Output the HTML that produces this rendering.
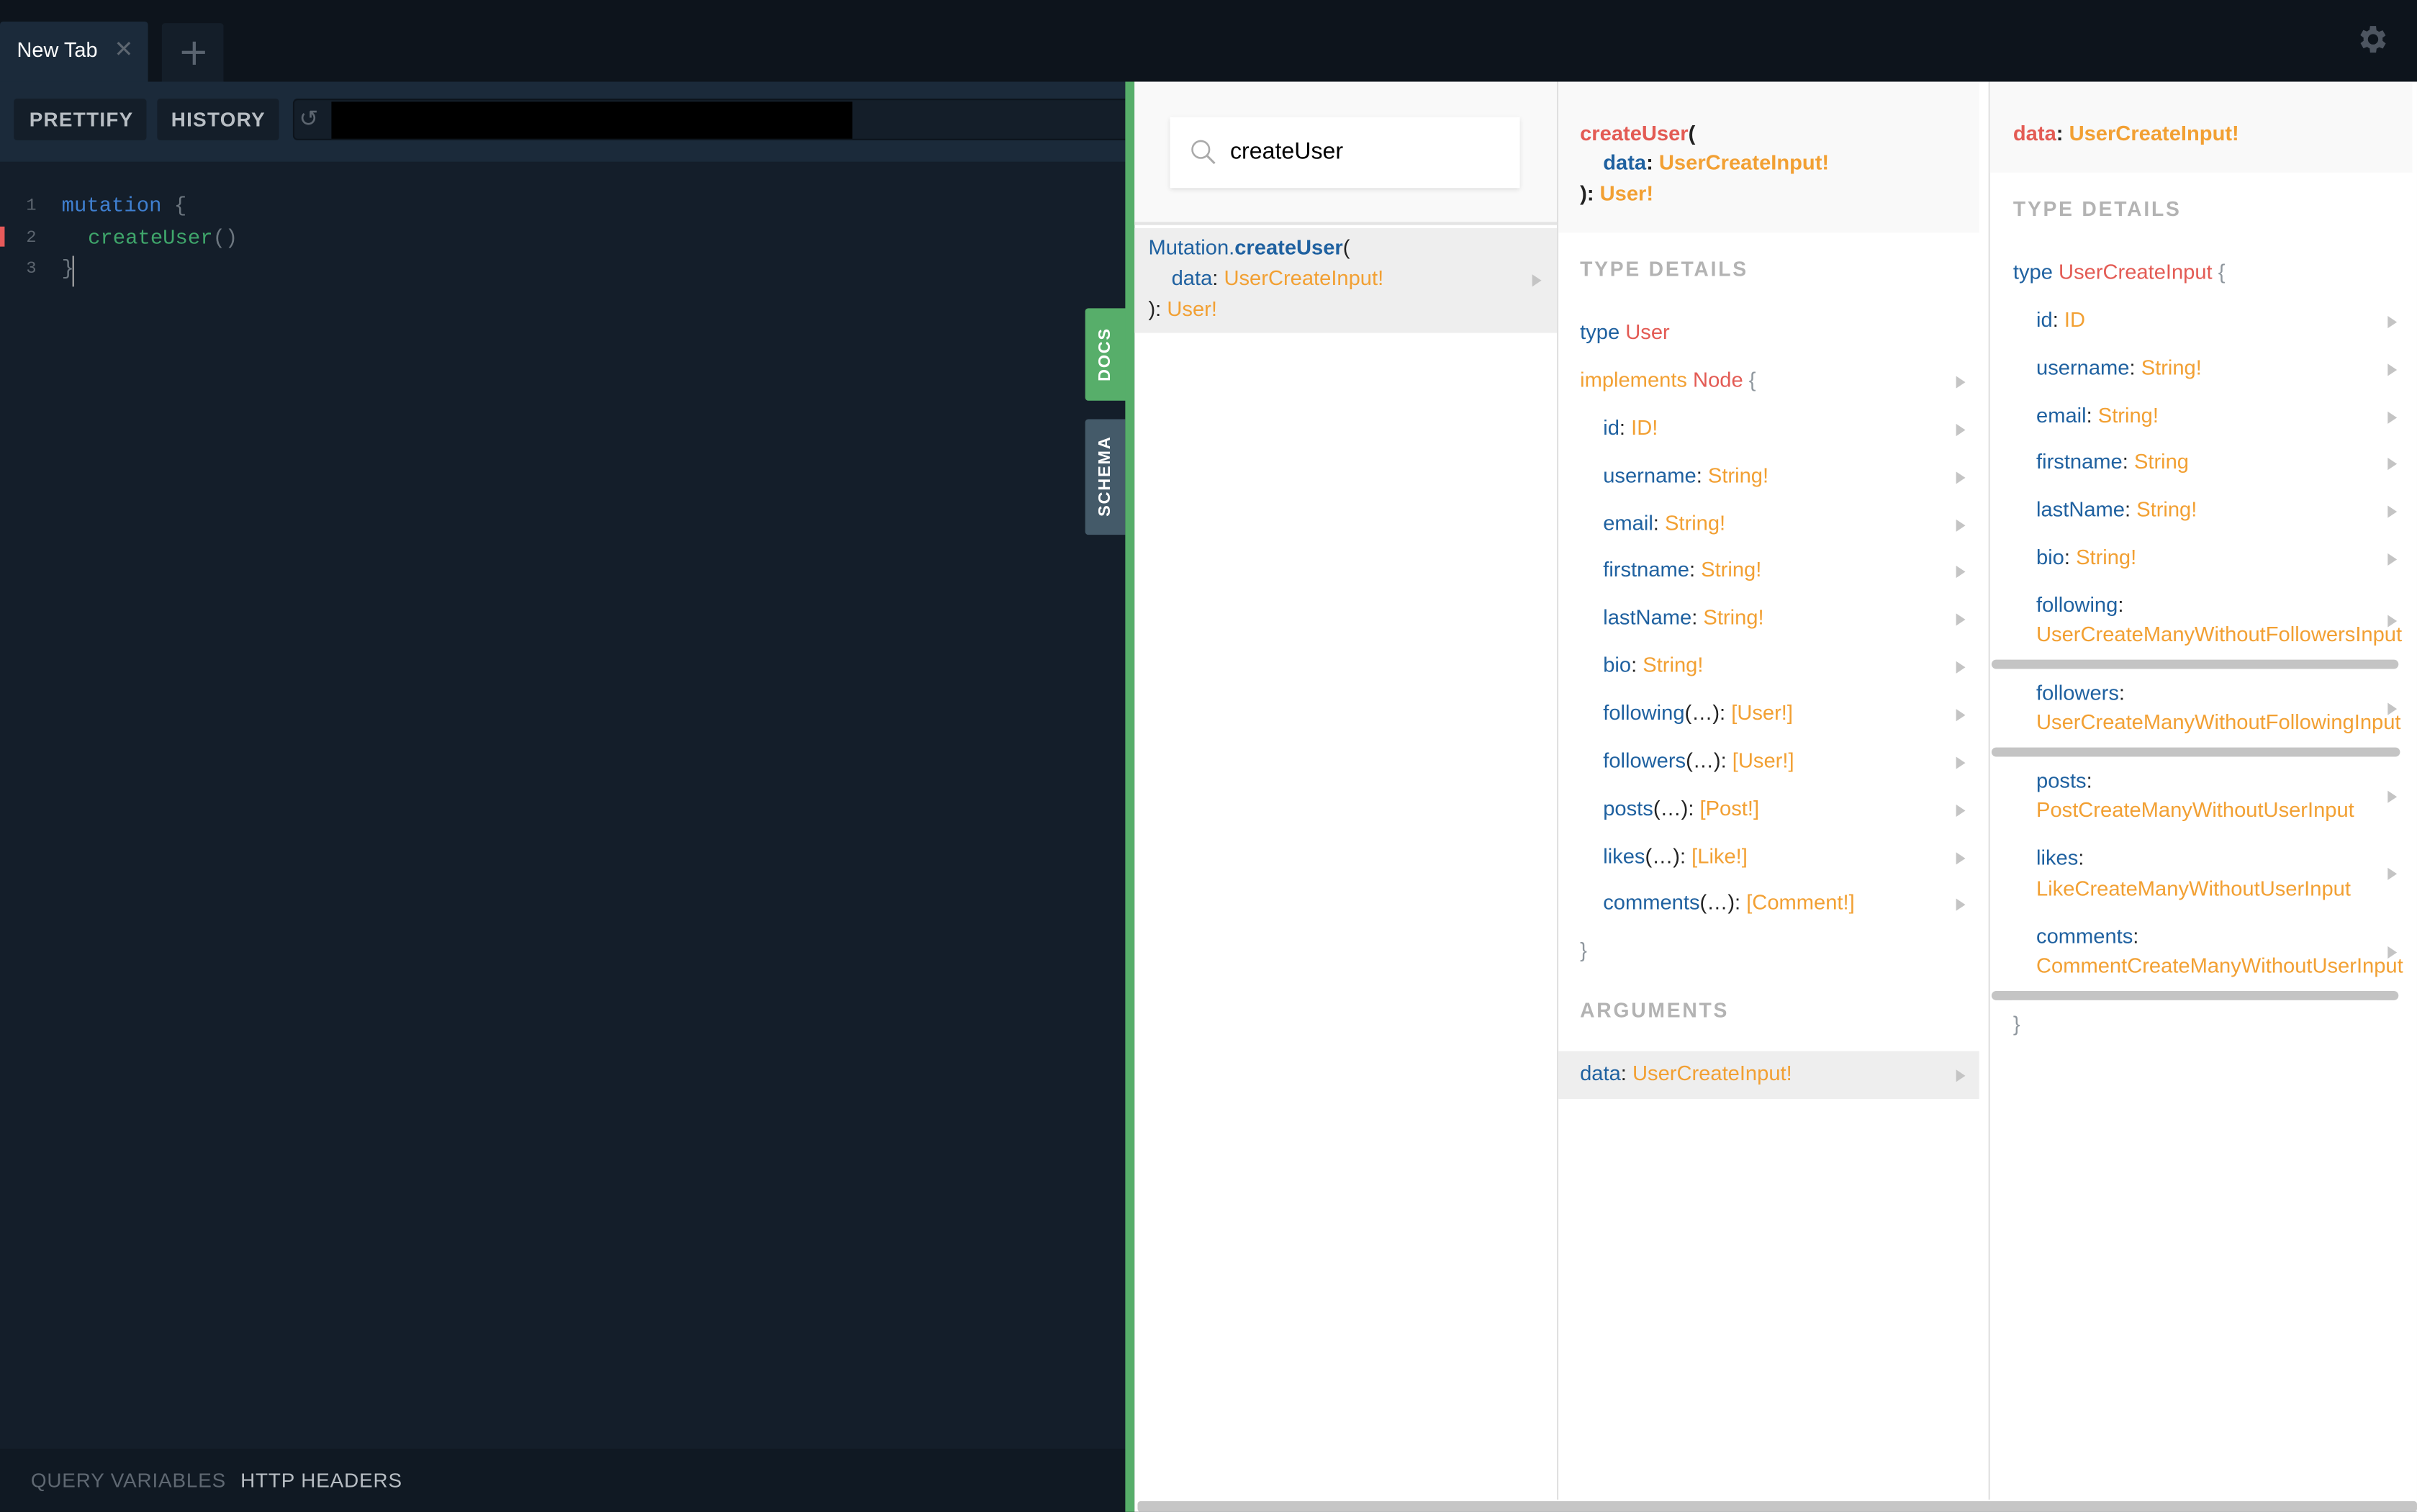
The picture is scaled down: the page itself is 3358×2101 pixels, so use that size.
<!DOCTYPE html>
<html><head><meta charset="utf-8"><style>
*{margin:0;padding:0;box-sizing:border-box}
html,body{width:3358px;height:2100px;overflow:hidden;background:#0f161f}
#w{position:absolute;left:0;top:0;width:1568px;height:981px;transform:scale(2.14158);transform-origin:0 0;font-family:"Liberation Sans",sans-serif;font-size:13.6px;overflow:hidden;background:#0f161f}
.a{position:absolute;white-space:nowrap}
.t{line-height:20px}
.b{color:#1f61a0}.o{color:#f2a033}.r{color:#e35b54}.k{color:#222}.g{color:#8f979e}
.h{color:#b3b3b3;font-weight:bold;letter-spacing:1.3px;font-size:13.2px}
.tri{position:absolute;width:0;height:0;border-left:6px solid #c4c4c4;border-top:4px solid transparent;border-bottom:4px solid transparent}
.sb{position:absolute;height:6px;border-radius:3px;background:#c4c4c4}
.mono{font-family:"Liberation Mono",monospace;font-size:13.5px}
</style></head><body><div id="w">
<div class="a" style="left:0;top:0;width:1568px;height:53px;background:#0d141c"></div>
<div class="a" style="left:0;top:14px;width:96px;height:39px;background:#1b2a3a;border-radius:2px 2px 0 0"></div>
<div class="a t" style="left:11px;top:23px;color:#fff;font-size:13.5px">New Tab</div>
<div class="a t" style="left:74px;top:23px;color:#5d6670;font-size:15px">✕</div>
<div class="a" style="left:105px;top:15px;width:40px;height:38px;background:#141e29;border-radius:2px 2px 0 0"></div>
<div class="a" style="left:118px;top:33px;width:15px;height:2px;background:#5a6470"></div>
<div class="a" style="left:124.5px;top:26.5px;width:2px;height:15px;background:#5a6470"></div>
<svg class="a" style="left:1528px;top:14px" width="23" height="23" viewBox="0 0 24 24"><path fill="#4d5560" d="M19.4 13a7.5 7.5 0 0 0 0-2l2.1-1.6-2-3.5-2.5 1a7.6 7.6 0 0 0-1.7-1L15 3h-4l-.4 2.7a7.6 7.6 0 0 0-1.7 1l-2.5-1-2 3.5L6.6 11a7.5 7.5 0 0 0 0 2l-2.1 1.6 2 3.5 2.5-1a7.6 7.6 0 0 0 1.7 1L11 21h4l.4-2.7a7.6 7.6 0 0 0 1.7-1l2.5 1 2-3.5zM13 15.5a3.5 3.5 0 1 1 0-7 3.5 3.5 0 0 1 0 7z" transform="translate(-1 0)"/></svg>
<div class="a" style="left:0;top:53px;width:730px;height:52px;background:#1b2a3a"></div>
<div class="a" style="left:0;top:105px;width:730px;height:835px;background:#141e2a"></div>
<div class="a" style="left:0;top:940px;width:730px;height:41px;background:#101923"></div>
<div class="a" style="left:9px;top:64px;width:86px;height:27px;background:#141e29;border-radius:2px"></div>
<div class="a t" style="left:19px;top:68px;color:#b8bec4;font-weight:bold;font-size:13px;letter-spacing:.6px">PRETTIFY</div>
<div class="a" style="left:102px;top:64px;width:79px;height:27px;background:#141e29;border-radius:2px"></div>
<div class="a t" style="left:111px;top:68px;color:#b8bec4;font-weight:bold;font-size:13px;letter-spacing:.6px">HISTORY</div>
<div class="a" style="left:190px;top:64px;width:542px;height:27px;background:#141e29;border-radius:3px 0 0 3px;border:1px solid #0d141c"></div>
<div class="a t" style="left:194px;top:68px;color:#5d6670;font-size:15px">↺</div>
<div class="a" style="left:215px;top:66px;width:338px;height:24px;background:#000"></div>
<div class="a t mono" style="left:17px;top:124px;color:#5d6670;font-size:11px">1</div>
<div class="a t mono" style="left:17px;top:145px;color:#5d6670;font-size:11px">2</div>
<div class="a t mono" style="left:17px;top:165px;color:#5d6670;font-size:11px">3</div>
<div class="a" style="left:0;top:147px;width:3px;height:13px;background:#e85a5a"></div>
<div class="a t mono" style="left:40px;top:125px"><span style="color:#3f7fd0">mutation</span> <span style="color:#6d7780">{</span></div>
<div class="a t mono" style="left:57px;top:146px"><span style="color:#3fa66b">createUser</span><span style="color:#6d7780">()</span></div>
<div class="a t mono" style="left:40px;top:166px;color:#6d7780">}</div>
<div class="a" style="left:47px;top:166px;width:1px;height:20px;background:#aaa"></div>
<div class="a t" style="left:20px;top:951px;color:#5f6872;font-size:13px;letter-spacing:.4px">QUERY VARIABLES</div>
<div class="a t" style="left:156px;top:951px;color:#b8bec4;font-size:13px;letter-spacing:.4px">HTTP HEADERS</div>
<div class="a" style="left:704px;top:200px;width:28px;height:60px;background:#57ae6a;border-radius:2px 0 0 2px"></div>
<div class="a" style="left:717px;top:230px;transform:translate(-50%,-50%) rotate(-90deg);color:#fff;font-weight:bold;font-size:11px;letter-spacing:.8px">DOCS</div>
<div class="a" style="left:704px;top:272px;width:26px;height:75px;background:#445a69;border-radius:2px 0 0 2px"></div>
<div class="a" style="left:717px;top:309px;transform:translate(-50%,-50%) rotate(-90deg);color:#fff;font-weight:bold;font-size:11px;letter-spacing:.8px">SCHEMA</div>
<div class="a" style="left:730px;top:53px;width:6px;height:928px;background:#57ae6a"></div>
<div class="a" style="left:736px;top:53px;width:832px;height:928px;background:#fff"></div>
<div class="a" style="left:736px;top:53px;width:274px;height:93px;background:#f9f9f9;border-bottom:2px solid #e4e4e4"></div>
<div class="a" style="left:759px;top:76px;width:227px;height:46px;background:#fff;box-shadow:0 1px 3px rgba(0,0,0,.12)"></div>
<svg class="a" style="left:772px;top:90px" width="18" height="18" viewBox="0 0 18 18"><circle cx="7" cy="7" r="5.5" fill="none" stroke="#aaa" stroke-width="1.2"/><path d="M11 11l5 5" stroke="#aaa" stroke-width="1.4"/></svg>
<div class="a t" style="left:798px;top:89px;color:#000;font-size:15px">createUser</div>
<div class="a" style="left:736px;top:148px;width:274px;height:68px;background:#eee"></div>
<div class="a t" style="left:745px;top:151px"><span class="b">Mutation.</span><b class="b">createUser</b><span class="k">(</span></div>
<div class="a t" style="left:760px;top:171px"><span class="b">data</span><span class="k">: </span><span class="o">UserCreateInput!</span></div>
<div class="tri" style="left:994px;top:178px"></div>
<div class="a t" style="left:745px;top:191px"><span class="k">): </span><span class="o">User!</span></div>
<div class="a" style="left:1010px;top:53px;width:1px;height:920px;background:#e0e0e0"></div>
<div class="a" style="left:1011px;top:53px;width:273px;height:98px;background:#f9f9f9"></div>
<div class="a t" style="left:1025px;top:77px;font-weight:bold"><span class="r">createUser</span><span class="k">(</span></div>
<div class="a t" style="left:1040px;top:96px;font-weight:bold"><span class="b">data</span><span class="k">: </span><span class="o">UserCreateInput!</span></div>
<div class="a t" style="left:1025px;top:116px;font-weight:bold"><span class="k">): </span><span class="o">User!</span></div>
<div class="a t h" style="left:1025px;top:165px">TYPE DETAILS</div>
<div class="a t" style="left:1025px;top:206px"><span class="b">type </span><span class="r">User</span></div>
<div class="a t" style="left:1025px;top:237px"><span class="o">implements </span><span class="r">Node</span><span class="g"> {</span></div>
<div class="tri" style="left:1269px;top:244px"></div>
<div class="a t" style="left:1040px;top:268px"><span class="b">id</span><span class="k">: </span><span class="o">ID!</span></div><div class="tri" style="left:1269px;top:275px"></div>
<div class="a t" style="left:1040px;top:299px"><span class="b">username</span><span class="k">: </span><span class="o">String!</span></div><div class="tri" style="left:1269px;top:306px"></div>
<div class="a t" style="left:1040px;top:330px"><span class="b">email</span><span class="k">: </span><span class="o">String!</span></div><div class="tri" style="left:1269px;top:337px"></div>
<div class="a t" style="left:1040px;top:360px"><span class="b">firstname</span><span class="k">: </span><span class="o">String!</span></div><div class="tri" style="left:1269px;top:367px"></div>
<div class="a t" style="left:1040px;top:391px"><span class="b">lastName</span><span class="k">: </span><span class="o">String!</span></div><div class="tri" style="left:1269px;top:398px"></div>
<div class="a t" style="left:1040px;top:422px"><span class="b">bio</span><span class="k">: </span><span class="o">String!</span></div><div class="tri" style="left:1269px;top:429px"></div>
<div class="a t" style="left:1040px;top:453px"><span class="b">following</span><span class="k">(…): </span><span class="o">[User!]</span></div><div class="tri" style="left:1269px;top:460px"></div>
<div class="a t" style="left:1040px;top:484px"><span class="b">followers</span><span class="k">(…): </span><span class="o">[User!]</span></div><div class="tri" style="left:1269px;top:491px"></div>
<div class="a t" style="left:1040px;top:515px"><span class="b">posts</span><span class="k">(…): </span><span class="o">[Post!]</span></div><div class="tri" style="left:1269px;top:522px"></div>
<div class="a t" style="left:1040px;top:546px"><span class="b">likes</span><span class="k">(…): </span><span class="o">[Like!]</span></div><div class="tri" style="left:1269px;top:553px"></div>
<div class="a t" style="left:1040px;top:576px"><span class="b">comments</span><span class="k">(…): </span><span class="o">[Comment!]</span></div><div class="tri" style="left:1269px;top:583px"></div>
<div class="a t g" style="left:1025px;top:607px">}</div>
<div class="a t h" style="left:1025px;top:646px">ARGUMENTS</div>
<div class="a" style="left:1011px;top:682px;width:273px;height:31px;background:#eee"></div>
<div class="a t" style="left:1025px;top:687px"><span class="b">data</span><span class="k">: </span><span class="o">UserCreateInput!</span></div><div class="tri" style="left:1269px;top:694px"></div>
<div class="a" style="left:1290px;top:53px;width:1px;height:920px;background:#e0e0e0"></div>
<div class="a" style="left:1291px;top:53px;width:274px;height:59px;background:#f9f9f9"></div>
<div class="a t" style="left:1306px;top:77px;font-weight:bold"><span class="r">data</span><span class="k">: </span><span class="o">UserCreateInput!</span></div>
<div class="a t h" style="left:1306px;top:126px">TYPE DETAILS</div>
<div class="a t" style="left:1306px;top:167px"><span class="b">type </span><span class="r">UserCreateInput</span><span class="g"> {</span></div>
<div class="a t" style="left:1321px;top:198px"><span class="b">id</span><span class="k">: </span><span class="o">ID</span></div><div class="tri" style="left:1549px;top:205px"></div>
<div class="a t" style="left:1321px;top:229px"><span class="b">username</span><span class="k">: </span><span class="o">String!</span></div><div class="tri" style="left:1549px;top:236px"></div>
<div class="a t" style="left:1321px;top:260px"><span class="b">email</span><span class="k">: </span><span class="o">String!</span></div><div class="tri" style="left:1549px;top:267px"></div>
<div class="a t" style="left:1321px;top:290px"><span class="b">firstname</span><span class="k">: </span><span class="o">String</span></div><div class="tri" style="left:1549px;top:297px"></div>
<div class="a t" style="left:1321px;top:321px"><span class="b">lastName</span><span class="k">: </span><span class="o">String!</span></div><div class="tri" style="left:1549px;top:328px"></div>
<div class="a t" style="left:1321px;top:352px"><span class="b">bio</span><span class="k">: </span><span class="o">String!</span></div><div class="tri" style="left:1549px;top:359px"></div>
<div class="a t" style="left:1321px;top:383px"><span class="b">following</span><span class="k">:</span></div>
<div class="a t o" style="left:1321px;top:402px">UserCreateManyWithoutFollowersInput</div><div class="tri" style="left:1549px;top:399px"></div>
<div class="sb" style="left:1292px;top:428px;width:264px"></div>
<div class="a t" style="left:1321px;top:440px"><span class="b">followers</span><span class="k">:</span></div>
<div class="a t o" style="left:1321px;top:459px">UserCreateManyWithoutFollowingInput</div><div class="tri" style="left:1549px;top:456px"></div>
<div class="sb" style="left:1292px;top:485px;width:265px"></div>
<div class="a t" style="left:1321px;top:497px"><span class="b">posts</span><span class="k">:</span></div>
<div class="a t o" style="left:1321px;top:516px">PostCreateManyWithoutUserInput</div><div class="tri" style="left:1549px;top:513px"></div>
<div class="a t" style="left:1321px;top:547px"><span class="b">likes</span><span class="k">:</span></div>
<div class="a t o" style="left:1321px;top:567px">LikeCreateManyWithoutUserInput</div><div class="tri" style="left:1549px;top:563px"></div>
<div class="a t" style="left:1321px;top:598px"><span class="b">comments</span><span class="k">:</span></div>
<div class="a t o" style="left:1321px;top:617px">CommentCreateManyWithoutUserInput</div><div class="tri" style="left:1549px;top:614px"></div>
<div class="sb" style="left:1292px;top:643px;width:264px"></div>
<div class="a t g" style="left:1306px;top:655px">}</div>
<div class="a" style="left:738px;top:974px;width:830px;height:7px;background:#c6c6c6;border-radius:2px"></div>
</div></body></html>
